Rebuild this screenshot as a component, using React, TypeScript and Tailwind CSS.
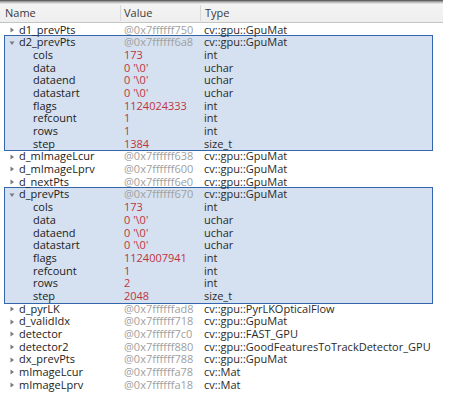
import React from "react";

type R = { name: string; value: string; type: string; child?: boolean; open?: boolean };

const top1: R[] = [{ name: "d1_prevPts", value: "@0x7ffffff750", type: "cv::gpu::GpuMat" }];

const group = (root: string, addr: string, flags: string, rows: string, step: string): R[] => [
  { name: root, value: addr, type: "cv::gpu::GpuMat", open: true },
  { name: "cols", value: "173", type: "int", child: true },
  { name: "data", value: "0 '\\0'", type: "uchar", child: true },
  { name: "dataend", value: "0 '\\0'", type: "uchar", child: true },
  { name: "datastart", value: "0 '\\0'", type: "uchar", child: true },
  { name: "flags", value: flags, type: "int", child: true },
  { name: "refcount", value: "1", type: "int", child: true },
  { name: "rows", value: rows, type: "int", child: true },
  { name: "step", value: step, type: "size_t", child: true },
];

const mid: R[] = [
  { name: "d_mImageLcur", value: "@0x7ffffff638", type: "cv::gpu::GpuMat" },
  { name: "d_mImageLprv", value: "@0x7ffffff600", type: "cv::gpu::GpuMat" },
  { name: "d_nextPts", value: "@0x7ffffff6e0", type: "cv::gpu::GpuMat" },
];

const bottom: R[] = [
  { name: "d_pyrLK", value: "@0x7ffffffad8", type: "cv::gpu::PyrLKOpticalFlow" },
  { name: "d_validIdx", value: "@0x7ffffff718", type: "cv::gpu::GpuMat" },
  { name: "detector", value: "@0x7ffffff7c0", type: "cv::gpu::FAST_GPU" },
  { name: "detector2", value: "@0x7ffffff880", type: "cv::gpu::GoodFeaturesToTrackDetector_GPU" },
  { name: "dx_prevPts", value: "@0x7ffffff788", type: "cv::gpu::GpuMat" },
  { name: "mImageLcur", value: "@0x7ffffffa78", type: "cv::Mat" },
  { name: "mImageLprv", value: "@0x7ffffffa18", type: "cv::Mat" },
];

function Tri({ open }: { open?: boolean }) {
  return open ? (
    <svg width="6" height="6" viewBox="0 0 6 6" className="shrink-0">
      <path d="M0.5 1.5 L5.5 1.5 L3 5 Z" fill="#7a7a7a" />
    </svg>
  ) : (
    <svg width="6" height="6" viewBox="0 0 6 6" className="shrink-0">
      <path d="M1.5 0.5 L5 3 L1.5 5.5 Z" fill="#7a7a7a" />
    </svg>
  );
}

function Row({ r, inset }: { r: R; inset?: boolean }) {
  const isAddr = r.value.startsWith("@");
  return (
    <div className="flex h-[12.7px] items-center leading-[12.7px] whitespace-nowrap">
      <div className={inset ? "flex w-[119px] items-center" : "flex w-[124px] items-center"}>
        {r.child ? (
          <span className={inset ? "pl-[28px]" : "pl-[33px]"}>{r.name}</span>
        ) : (
          <>
            <span className={inset ? "pl-[4px] pr-[4px] flex" : "pl-[9px] pr-[4px] flex"}>
              <Tri open={r.open} />
            </span>
            <span>{r.name}</span>
          </>
        )}
      </div>
      <div className={"w-[80px] " + (isAddr ? "text-[#a0a0a0]" : "text-[#c0343f]")}>{r.value}</div>
      <div className="text-[#2a2a2a]">{r.type}</div>
    </div>
  );
}

function Group({ rows }: { rows: R[] }) {
  return (
    <div className="ml-[4px] my-[-1px] w-[429px] border border-[#3566ab] bg-[#d5e1f0]">
      {rows.map((r, i) => (
        <Row key={i} r={r} inset />
      ))}
    </div>
  );
}

export default function App() {
  return (
    <div
      className="relative h-[403px] w-[469px] overflow-hidden bg-white text-[11px] text-[#222]"
      style={{ fontFamily: '"Open Sans", "Noto Sans", sans-serif' }}
    >
      <div className="w-[443px]">
        <div className="h-[4px] bg-gradient-to-b from-[#4a4a4a] via-[#b5b5b5] to-[#eeeeee]" />
        <div className="flex h-[19px] items-center border-b border-[#c4c4c4] bg-gradient-to-b from-[#f4f4f4] to-[#eeeeee] text-[#3a3a3a]">
          <div className="w-[121px] border-r border-[#d8d8d8] pl-[5px]">Name</div>
          <div className="w-[80px] border-r border-[#d8d8d8] pl-[3px]">Value</div>
          <div className="pl-[4px]">Type</div>
        </div>
      </div>
      <div className="pt-[0.5px]">
        {top1.map((r, i) => (
          <Row key={i} r={r} />
        ))}
        <Group rows={group("d2_prevPts", "@0x7ffffff6a8", "1124024333", "1", "1384")} />
        {mid.map((r, i) => (
          <Row key={i} r={r} />
        ))}
        <Group rows={group("d_prevPts", "@0x7ffffff670", "1124007941", "2", "2048")} />
        {bottom.map((r, i) => (
          <Row key={i} r={r} />
        ))}
      </div>
    </div>
  );
}
